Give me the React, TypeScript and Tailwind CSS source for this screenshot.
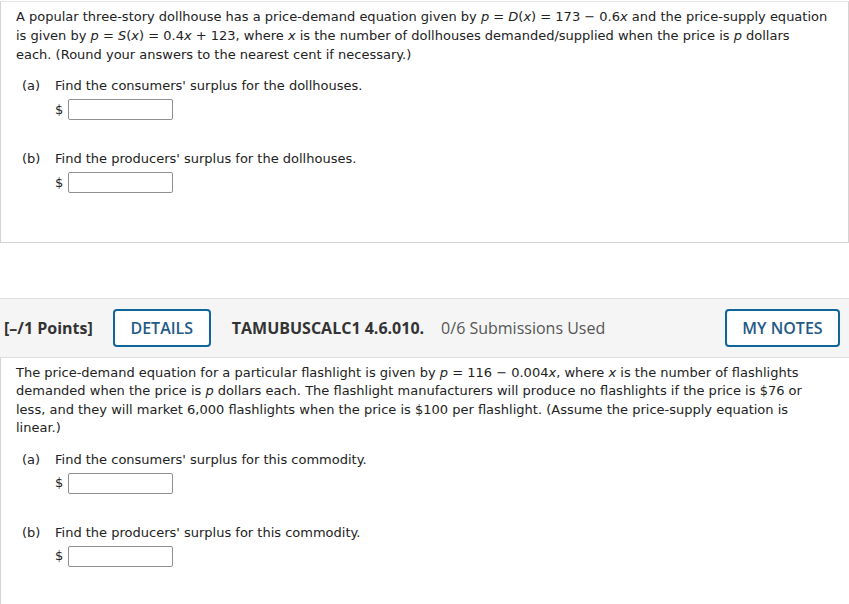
import React from 'react'

const body = { fontFamily: '"DejaVu Sans", Verdana, sans-serif' }
const head = { fontFamily: '"Open Sans", "Noto Sans", sans-serif' }

function Answer() {
  return (
    <div className="flex items-center pl-[39px] mt-[4px] h-[21px]">
      <span className="w-[13px] text-[13px]">$</span>
      <input
        type="text"
        className="w-[105px] h-[21px] border border-[#8f8f8f] rounded-[2px] bg-white"
      />
    </div>
  )
}

function Part({ label, text, className }: { label: string; text: string; className?: string }) {
  return (
    <div className={className}>
      <div className="flex leading-[19px] pl-[6px]">
        <span className="w-[33px]">{label}</span>
        <span>{text}</span>
      </div>
      <Answer />
    </div>
  )
}

export default function App() {
  return (
    <div className="w-[849px] h-[604px] bg-white text-[#222] text-[13px] overflow-hidden" style={body}>
      {/* first question */}
      <div className="mt-[1px] border border-[#d4d4d4] border-t-[#e6e6e6] pl-[15px] pt-[5px] pb-[49px]">
        <p className="leading-[19px]">
          A popular three-story dollhouse has a price-demand equation given by <i>p</i> = <i>D</i>(<i>x</i>) = 173 − 0.6<i>x</i> and the price-supply equation
          <br />
          is given by <i>p</i> = <i>S</i>(<i>x</i>) = 0.4<i>x</i> + 123, where <i>x</i> is the number of dollhouses demanded/supplied when the price is <i>p</i> dollars
          <br />
          each. (Round your answers to the nearest cent if necessary.)
        </p>
        <Part className="mt-[12px]" label="(a)" text="Find the consumers' surplus for the dollhouses." />
        <Part className="mt-[29px]" label="(b)" text="Find the producers' surplus for the dollhouses." />
      </div>

      <div className="h-[55px]" />

      {/* header strip */}
      <div className="flex items-center h-[60px] bg-[#f5f5f5] border-t border-b border-[#dedede] pr-[9px]" style={head}>
        <span className="ml-[4px] text-[16px] font-bold text-[#333]">[–/1 Points]</span>
        <button className="ml-[20px] w-[98px] h-[38px] border-2 border-[#0e6699] rounded-[4px] bg-white text-[16px] text-[#1f5b86] font-semibold">
          DETAILS
        </button>
        <span className="ml-[21px] text-[16px] font-bold text-[#333]">TAMUBUSCALC1 4.6.010.</span>
        <span className="ml-[17px] text-[16px] text-[#555]">0/6 Submissions Used</span>
        <button className="ml-auto w-[115px] h-[38px] border-2 border-[#0e6699] rounded-[4px] bg-white text-[16px] text-[#1f5b86] font-semibold">
          MY NOTES
        </button>
      </div>

      {/* second question */}
      <div className="border-l border-[#d4d4d4] pl-[15px] pt-[6px] pr-[30px]">
        <p className="leading-[18.4px]">
          The price-demand equation for a particular flashlight is given by <i>p</i> = 116 − 0.004<i>x</i>, where <i>x</i> is the number of flashlights demanded when the price is <i>p</i> dollars each. The flashlight manufacturers will produce no flashlights if the price is $76 or less, and they will market 6,000 flashlights when the price is $100 per flashlight. (Assume the price-supply equation is linear.)
        </p>
        <Part className="mt-[12px]" label="(a)" text="Find the consumers' surplus for this commodity." />
        <Part className="mt-[29px]" label="(b)" text="Find the producers' surplus for this commodity." />
        <div className="h-[40px]" />
      </div>
    </div>
  )
}
